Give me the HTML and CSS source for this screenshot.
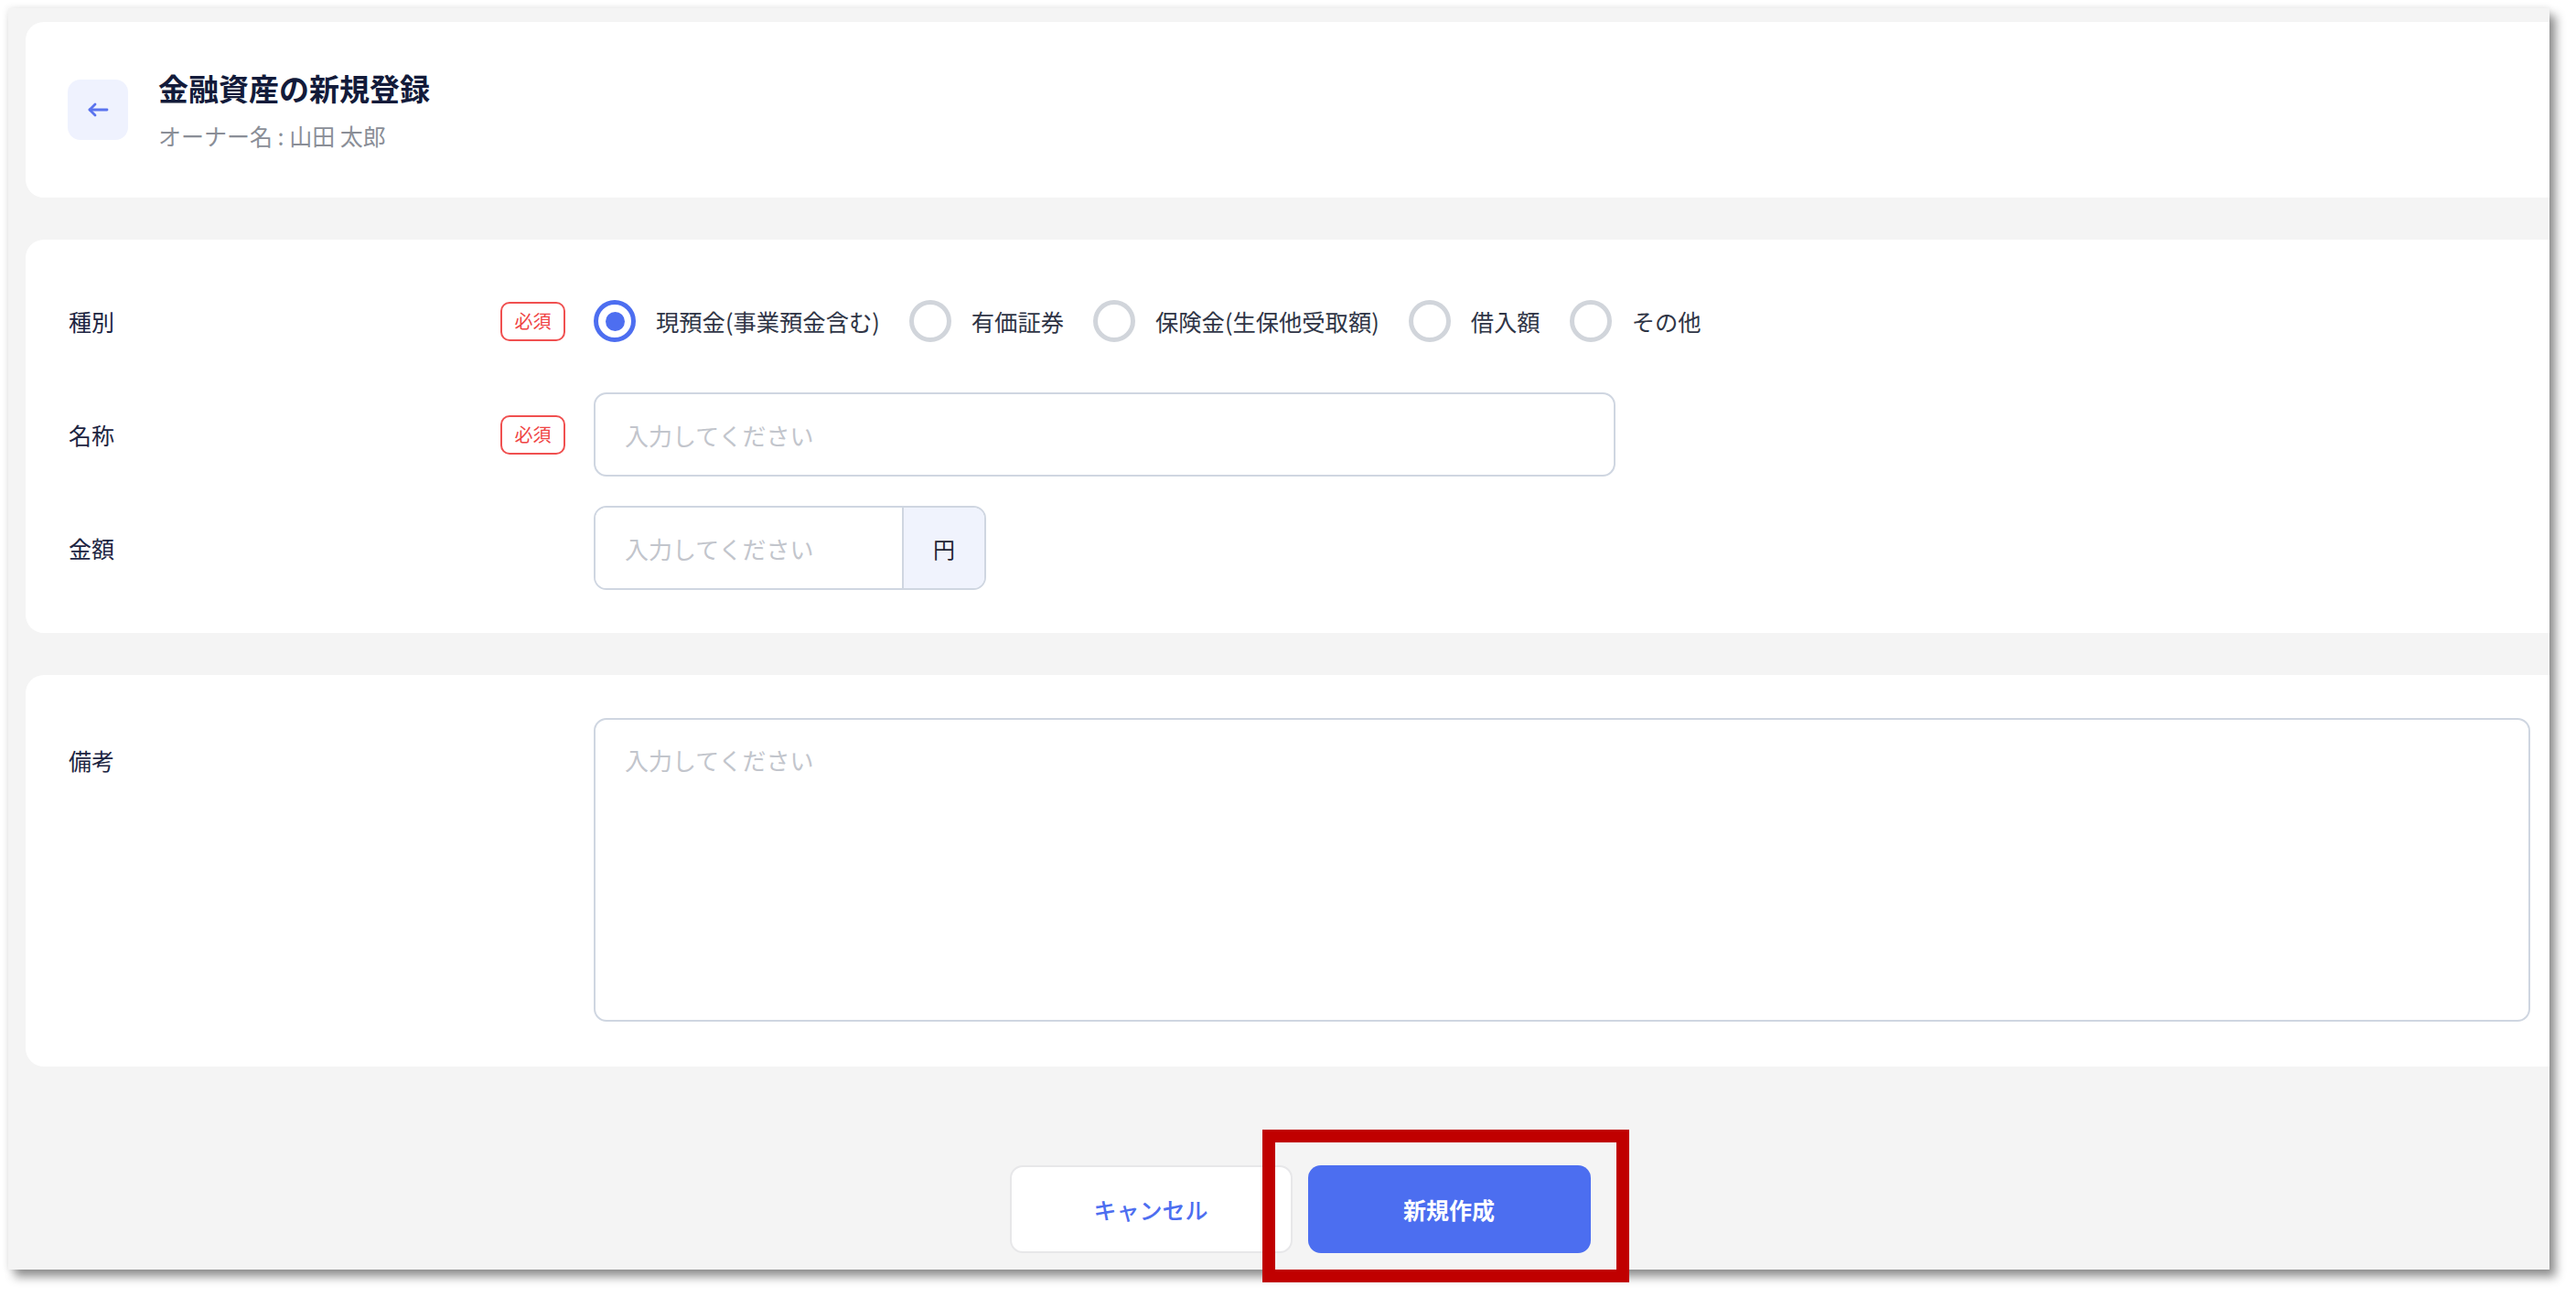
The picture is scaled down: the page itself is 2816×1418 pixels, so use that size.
FILE: index.html
```html
<!DOCTYPE html>
<html lang="ja">
<head>
<meta charset="utf-8">
<title>金融資産の新規登録</title>
<link rel="stylesheet" href="styles.css">
</head>
<body>
<div class="frame">
  <div class="content">
    <header class="card head">
      <button class="back" type="button" aria-label="戻る">
        <svg width="24" height="18" viewBox="0 0 24 18" fill="none" stroke="#5a73ee" stroke-width="2.8" stroke-linecap="round" stroke-linejoin="round"><path d="M22 9H3"/><path d="M9 3L3 9l6 6"/></svg>
      </button>
      <div class="titles">
        <h1 class="title">金融資産の新規登録</h1>
        <p class="sub">オーナー名 : 山田 太郎</p>
      </div>
    </header>

    <section class="card form">
      <div class="row">
        <div class="label">種別</div>
        <div class="req"><span class="badge">必須</span></div>
        <div class="radios">
          <label class="opt"><span class="radio on"></span>現預金(事業預金含む)</label>
          <label class="opt"><span class="radio"></span>有価証券</label>
          <label class="opt"><span class="radio"></span>保険金(生保他受取額)</label>
          <label class="opt"><span class="radio"></span>借入額</label>
          <label class="opt"><span class="radio"></span>その他</label>
        </div>
      </div>
      <div class="row">
        <div class="label">名称</div>
        <div class="req"><span class="badge">必須</span></div>
        <input class="text-input" type="text" placeholder="入力してください">
      </div>
      <div class="row">
        <div class="label">金額</div>
        <div class="req"></div>
        <div class="amount">
          <input class="amount-input" type="text" placeholder="入力してください">
          <span class="yen">円</span>
        </div>
      </div>
    </section>

    <section class="card notes">
      <div class="row-top">
        <div class="label top-label">備考</div>
        <div class="req"></div>
        <textarea class="memo" placeholder="入力してください"></textarea>
      </div>
    </section>

    <div class="actions">
      <button class="btn cancel" type="button">キャンセル</button>
      <button class="btn primary" type="button">新規作成</button>
    </div>
  </div>
</div>
<div class="highlight"></div>
</body>
</html>
```
FILE: styles.css
```css
* { box-sizing: border-box; }

html, body {
  margin: 0;
  padding: 0;
}

body {
  position: relative;
  width: 2816px;
  height: 1418px;
  overflow: hidden;
  background: #ffffff;
  font-family: "Noto Sans CJK JP", "Noto Sans", sans-serif;
  color: #1d2542;
}

.frame {
  margin: 9px 0 0 9px;
  width: 2778px;
  height: 1379px;
  padding: 15px 0 0 19px;
  background: #f4f4f4;
  overflow: hidden;
  box-shadow: 7px 8px 10px rgba(0, 0, 0, 0.42), 0 0 8px rgba(0, 0, 0, 0.10);
}

.content {
  width: 2786px;
}

.card {
  background: #ffffff;
  border-radius: 20px;
}

/* header */
.head {
  height: 192px;
  display: flex;
  align-items: center;
  padding-left: 46px;
}

.back {
  width: 66px;
  height: 66px;
  padding: 0;
  border: 0;
  border-radius: 14px;
  background: #eff2fe;
  display: flex;
  align-items: center;
  justify-content: center;
}

.titles {
  margin-left: 33px;
  display: flex;
  flex-direction: column;
  gap: 12px;
}

.title {
  margin: 0;
  font-size: 33px;
  line-height: 45px;
  font-weight: 700;
  color: #131b3a;
}

.sub {
  margin: 0;
  font-size: 25px;
  line-height: 35px;
  color: #8a8e97;
}

/* form card */
.form {
  margin-top: 46px;
  padding: 43px 0 47px 47px;
  display: flex;
  flex-direction: column;
  gap: 32px;
}

.row {
  display: grid;
  grid-template-columns: 472px 102px auto;
  align-items: center;
  height: 92px;
}

.label {
  font-size: 25px;
  line-height: 36px;
  color: #1d2542;
}

.req {
  display: flex;
  align-items: center;
}

.badge {
  display: inline-flex;
  align-items: center;
  justify-content: center;
  width: 71px;
  height: 43px;
  border: 2px solid #f05050;
  border-radius: 10px;
  color: #ef4444;
  font-size: 20px;
  line-height: 1;
}

.radios {
  display: flex;
  align-items: center;
  gap: 32px;
}

.opt {
  display: flex;
  align-items: center;
  gap: 22px;
  font-size: 25.3px;
  line-height: 36px;
  color: #2f3546;
}

.radio {
  width: 46px;
  height: 46px;
  border-radius: 50%;
  border: 5px solid #d1d5db;
  display: flex;
  align-items: center;
  justify-content: center;
  flex: none;
}

.radio.on {
  border-color: #4d6ef0;
}

.radio.on::after {
  content: "";
  width: 21px;
  height: 21px;
  border-radius: 50%;
  background: #4d6ef0;
}

.text-input {
  width: 1117px;
  height: 92px;
  border: 2px solid #cfd6e1;
  border-radius: 14px;
  padding: 0 32px;
  font-family: inherit;
  font-size: 26px;
  color: #1d2542;
  background: #ffffff;
  outline: none;
}

.amount {
  display: flex;
  width: 429px;
  height: 92px;
  border: 2px solid #cfd6e1;
  border-radius: 14px;
  overflow: hidden;
}

.amount-input {
  width: 335px;
  height: 100%;
  border: 0;
  padding: 0 32px;
  font-family: inherit;
  font-size: 26px;
  background: #ffffff;
  outline: none;
}

.yen {
  flex: 1;
  display: flex;
  align-items: center;
  justify-content: center;
  background: #f0f3fd;
  border-left: 2px solid #cfd6e1;
  font-size: 24px;
  color: #1f2433;
}

input::placeholder,
textarea::placeholder {
  color: #c2c5cc;
}

/* notes card */
.notes {
  margin-top: 46px;
  padding: 47px 48px 49px 47px;
}

.row-top {
  display: grid;
  grid-template-columns: 472px 102px 1fr;
  align-items: start;
}

.top-label {
  padding-top: 28px;
}

.memo {
  width: 100%;
  height: 332px;
  border: 2px solid #cfd6e1;
  border-radius: 14px;
  padding: 24px 32px;
  font-family: inherit;
  font-size: 26px;
  line-height: 40px;
  resize: none;
  outline: none;
  display: block;
}

/* actions */
.actions {
  margin-top: 108px;
  display: flex;
  justify-content: center;
  gap: 17px;
}

.btn {
  width: 309px;
  height: 96px;
  border-radius: 14px;
  font-family: inherit;
  font-size: 25px;
  cursor: pointer;
}

.cancel {
  background: #ffffff;
  border: 2px solid #e7e7e9;
  color: #4d6ef0;
  font-weight: 500;
}

.primary {
  background: #4c6ef0;
  border: 0;
  color: #ffffff;
  font-weight: 700;
}

/* annotation overlay */
.highlight {
  position: absolute;
  left: 1380px;
  top: 1235px;
  width: 401px;
  height: 167px;
  border: 14px solid #c00000;
}
```
